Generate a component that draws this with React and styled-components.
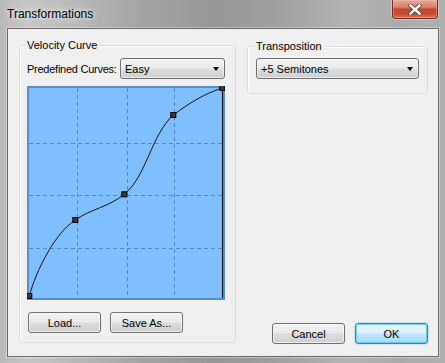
import React from 'react';
import styled, { createGlobalStyle } from 'styled-components';

const GlobalStyle = createGlobalStyle`
    html, body {
        margin : 0;
        padding : 0;
        width : 445px;
        height : 363px;
        overflow : hidden;
        background : #a8a8a8;
    }
`;

// handle positions inside the curve editor (svg coords)
const handles = [
    [2.3, 210],
    [48.3, 134],
    [97.3, 108.3],
    [146.3, 29],
    [195.3, 2],
];

const curvePath =
    'M2.3 210 C 9.3 184, 28.3 146.6, 48.3 134' +
    ' C 64.3 122.8, 81.3 121.1, 97.3 108.3' +
    ' C 119.3 90.7, 124.3 48.8, 146.3 29' +
    ' C 161.3 18, 175.3 8.5, 195.3 2';

const CurveEditor = () => (
    <Graph width="198" height="214" viewBox="0 0 198 214">
        <rect x="1" y="1" width="196" height="212" fill="#80bfff" stroke="#5b8fc4" strokeWidth="2" />
        {[50.5, 100.5, 147.5].map((x) => (
            <line key={'v' + x} x1={x} y1="2" x2={x} y2="212" stroke="#5585bd" strokeDasharray="4 3" />
        ))}
        {[57.5, 109.5, 162.5].map((y) => (
            <line key={'h' + y} x1="2" y1={y} x2="196" y2={y} stroke="#5585bd" strokeDasharray="4 3" />
        ))}
        <line x1="195.5" y1="2" x2="195.5" y2="212" stroke="#111" strokeWidth="1.1" />
        <path d={curvePath} fill="none" stroke="#111" strokeWidth="1" />
        {handles.map(([x, y], i) => (
            <rect key={i} x={x - 2.5} y={y - 2.5} width="5" height="5" fill="#3a3a3a" stroke="#000" strokeWidth="1" />
        ))}
    </Graph>
);

const App = () => {
    return (
        <Window>
            <GlobalStyle />
            <TitleBar>
                <Title>Transformations</Title>
                <CloseButton>
                    <svg width="14" height="11" viewBox="0 0 14 11">
                        <path d="M2.5 1.5 L11.5 9.5 M11.5 1.5 L2.5 9.5" stroke="#4a4a4a" strokeWidth="4.2" strokeLinecap="square" />
                        <path d="M2.5 1.5 L11.5 9.5 M11.5 1.5 L2.5 9.5" stroke="#fff" strokeWidth="2.4" strokeLinecap="square" />
                    </svg>
                </CloseButton>
            </TitleBar>
            <Client>
                <Group>
                    <Legend $left={5}>Velocity Curve</Legend>
                    <CurveContent>
                        <PresetRow>
                            <Label>Predefined Curves:</Label>
                            <Select $width={105}>
                                <span>Easy</span>
                                <Arrow />
                            </Select>
                        </PresetRow>
                        <CurveEditor />
                        <ButtonRow $left>
                            <Button>Load...</Button>
                            <Button>Save As...</Button>
                        </ButtonRow>
                    </CurveContent>
                </Group>
                <RightColumn>
                    <SmallGroup>
                        <Legend $left={6}>Transposition</Legend>
                        <Select $width={163}>
                            <span>+5 Semitones</span>
                            <Arrow />
                        </Select>
                    </SmallGroup>
                    <ButtonRow>
                        <Button>Cancel</Button>
                        <Button $primary>OK</Button>
                    </ButtonRow>
                </RightColumn>
            </Client>
        </Window>
    );
};

export default App;

const Window = styled.div`
    width : 445px;
    height : 363px;
    display : flex;
    flex-direction : column;
    box-sizing : border-box;
    background : linear-gradient(90deg, #b9b9b9 0%, #c6c6c6 6%, #bdbdbd 14%, #a3a3a3 32%, #979797 48%, #9d9d9d 60%, #b4b4b4 78%, #aaaaaa 90%, #b0b0b0 100%);
    font-family : 'Liberation Sans', Arial, sans-serif;
    font-size : 11px;
    color : #000;
`;

const TitleBar = styled.div`
    height : 28px;
    display : flex;
    justify-content : space-between;
    align-items : flex-start;
    padding-left : 7px;
`;

const Title = styled.div`
    font-size : 12px;
    line-height : 14px;
    padding-top : 7px;
    color : #000;
    text-shadow : 0 0 6px rgba(255, 255, 255, 0.9), 0 0 10px rgba(255, 255, 255, 0.6);
`;

const CloseButton = styled.div`
    width : 44px;
    height : 18px;
    margin-right : 7px;
    display : flex;
    justify-content : center;
    align-items : center;
    border : 1px solid #6b2e22;
    border-top : none;
    border-radius : 0 0 4px 4px;
    background : linear-gradient(#e6a898 0%, #d9806c 40%, #c4452c 52%, #c74a30 75%, #e0704f 100%);
    box-shadow : inset 0 0 0 1px rgba(255, 210, 190, 0.35), 0 0 0 1px rgba(255, 255, 255, 0.35);
`;

const Client = styled.div`
    flex : 1;
    margin : 0 6px 6px 7px;
    border : 1px solid #6a6a6a;
    box-shadow : 0 0 0 1px rgba(255, 255, 255, 0.35);
    background : #f0f0f0;
    display : grid;
    grid-template-columns : 217px 181px;
    column-gap : 11px;
    padding : 16px 10px 13px 11px;
`;

const RightColumn = styled.div`
    display : flex;
    flex-direction : column;
`;

const Group = styled.div`
    position : relative;
    border : 1px solid #d5dfe5;
    border-radius : 3px;
    box-shadow : inset 1px 1px 0 #fff;
`;

const SmallGroup = styled(Group)`
    margin-top : 1px;
    padding : 11px 8px 14px 8px;
`;

const Legend = styled.span`
    position : absolute;
    top : -7px;
    left : ${(p) => p.$left}px;
    padding : 0 2px;
    line-height : 13px;
    background : #f0f0f0;
`;

const CurveContent = styled.div`
    display : flex;
    flex-direction : column;
    padding : 12px 10px 9px 7px;
`;

const PresetRow = styled.div`
    display : flex;
    align-items : center;
    height : 21px;
    margin-bottom : 7px;
`;

const Label = styled.span`
    width : 93px;
    white-space : nowrap;
    letter-spacing : -0.25px;
`;

const Select = styled.div`
    width : ${(p) => p.$width}px;
    height : 21px;
    box-sizing : border-box;
    display : flex;
    align-items : center;
    justify-content : space-between;
    padding : 0 5px 0 4px;
    border : 1px solid #707070;
    border-radius : 3px;
    background : linear-gradient(#f2f2f2 0%, #ebebeb 48%, #dddddd 52%, #cfcfcf 100%);
    box-shadow : inset 0 0 0 1px rgba(255, 255, 255, 0.55);
`;

const Arrow = styled.span`
    width : 0;
    height : 0;
    border-left : 3.5px solid transparent;
    border-right : 3.5px solid transparent;
    border-top : 4px solid #000;
`;

const Graph = styled.svg`
    display : block;
    width : 198px;
    height : 214px;
`;

const ButtonRow = styled.div`
    display : flex;
    gap : ${(p) => (p.$left ? 9 : 10)}px;
    justify-content : ${(p) => (p.$left ? 'flex-start' : 'flex-end')};
    margin : ${(p) => (p.$left ? '12px 0 0 1px' : 'auto 0 -1px 0')};
`;

const Button = styled.div`
    width : 73px;
    height : 21px;
    box-sizing : border-box;
    display : flex;
    justify-content : center;
    align-items : center;
    border : 1px solid ${(p) => (p.$primary ? '#3c7fb1' : '#707070')};
    border-radius : 3px;
    background : ${(p) =>
        p.$primary
            ? 'linear-gradient(#eaf6fd 0%, #d9f0fc 48%, #bee6fd 52%, #a7d9f5 100%)'
            : 'linear-gradient(#f2f2f2 0%, #ebebeb 48%, #dddddd 52%, #cfcfcf 100%)'};
    box-shadow : ${(p) =>
        p.$primary
            ? 'inset 0 0 0 1px rgba(90, 200, 250, 0.8), 0 0 2px rgba(60, 160, 230, 0.6)'
            : 'inset 0 0 0 1px rgba(255, 255, 255, 0.6)'};
`;
